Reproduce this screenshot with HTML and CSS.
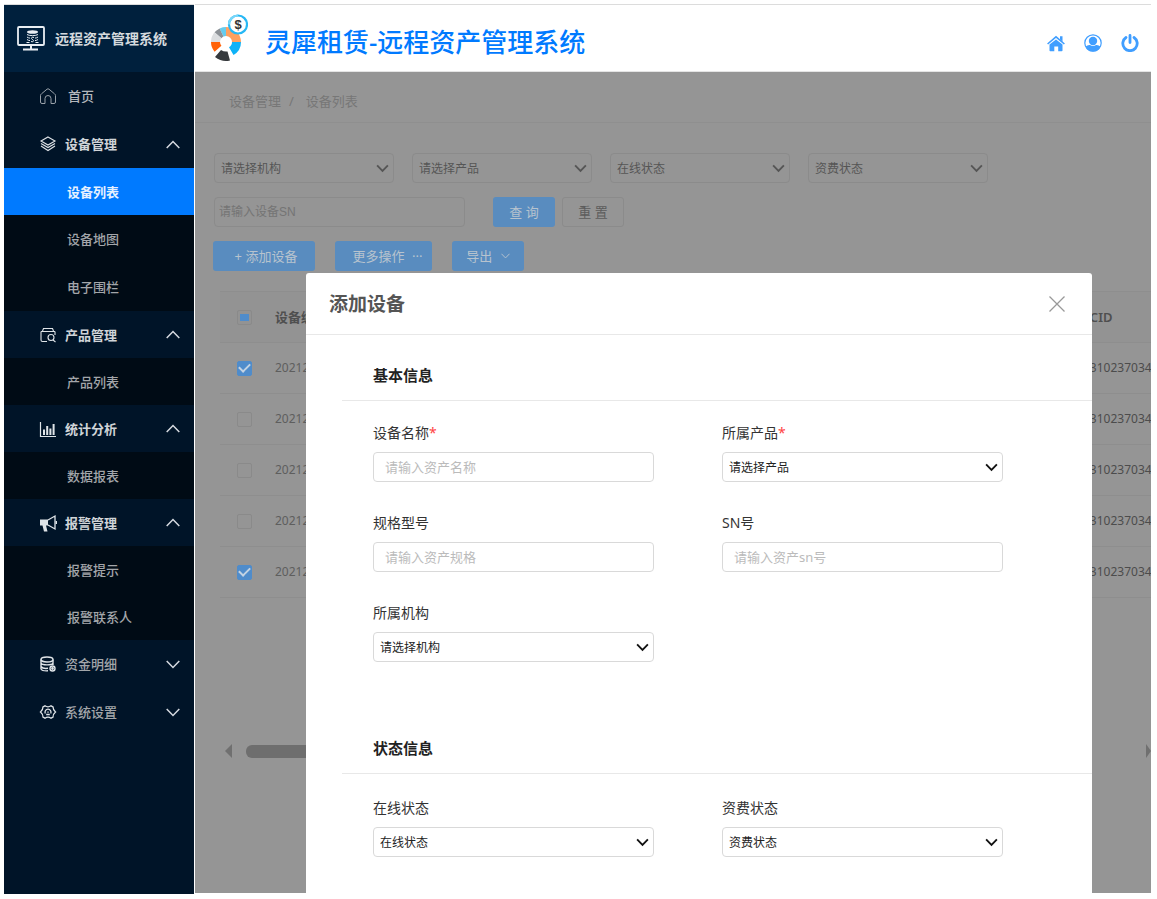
FILE: index.html
```html
<!DOCTYPE html>
<html lang="zh-CN">
<head>
<meta charset="utf-8">
<title>灵犀租赁-远程资产管理系统</title>
<link rel="stylesheet" href="styles.css">
</head>
<body>
<svg class="sprite" aria-hidden="true">
  <symbol id="down" viewBox="0 0 14 9"><path d="M1.2 1.2 7 7l5.800-5.800" fill="none" stroke="currentColor" stroke-width="2"/></symbol>
  <symbol id="thin" viewBox="0 0 14 9"><path d="M.7 1 7 7.500 13.300 1" fill="none" stroke="currentColor" stroke-width="1.500"/></symbol>
</svg>
<div class="app">
  <aside class="sidebar">
    <div class="brand">
      <svg class="brand-icon" viewBox="0 0 28 26" fill="none" stroke="#e9eef3">
        <rect x="1" y="1" width="26" height="18" rx="1" stroke-width="1.800"/>
        <path d="M14 19v4M6 23.500h15" stroke-width="2"/>
        <ellipse cx="15.500" cy="6" rx="5.500" ry="1.800" fill="#e9eef3" stroke="none"/>
        <path d="M10 8.500c2 1.500 9 1.500 11 0M10 11c1 .8 2 1 3 1.100M18 12.100c1-.1 2-.3 3-1.100M10 13.500c1 .8 2 1 3 1.100M18 14.600c1-.1 2-.3 3-1.100M9.500 16.500h3M18.500 16.500h3M17 11.500c-3-1-3 1.500-1.500 2s1.500 3-1.500 2" stroke-width="1"/>
      </svg>
      <span>远程资产管理系统</span>
    </div>
    <nav class="menu">
      <a class="item home" href="#"><svg class="ico" viewBox="0 0 18 18" fill="none" stroke="currentColor"><path d="M1.500 8.500Q1.500 7.500 2.500 6.800L8 2.200q1-.8 2 0l5.500 4.600q1 .7 1 1.700V15q0 1.500-1.500 1.500h-3v-5a3 3 0 0 0-6 0v5H3q-1.500 0-1.500-1.500z"/></svg>首页</a>
      <a class="item open" href="#"><svg class="ico" viewBox="0 0 18 18" fill="none" stroke="currentColor" stroke-width="1.100"><path d="M9 2l7 4-7 4-7-4zM2 8.500l7 4 7-4M2 11l7 4.500 7-4.500"/></svg>设备管理<svg class="arrow up"><use href="#thin"/></svg></a>
      <div class="sub">
        <a class="item active" href="#">设备列表</a>
        <a class="item" href="#">设备地图</a>
        <a class="item" href="#">电子围栏</a>
      </div>
      <a class="item open short" href="#"><svg class="ico" viewBox="0 0 18 18" fill="none" stroke="currentColor" stroke-width="1.100"><path d="M2 5.500h14M3.500 5l1-2.500h9l1 2.500M8 15.500H3.500Q2 15.500 2 14V5.500M16 5.500V9"/><circle cx="12" cy="11.500" r="3"/><path d="M14 14l2.500 2"/></svg>产品管理<svg class="arrow up"><use href="#thin"/></svg></a>
      <div class="sub"><a class="item short" href="#">产品列表</a></div>
      <a class="item open short" href="#"><svg class="ico" viewBox="0 0 18 18" fill="none" stroke="currentColor"><path d="M1.500 2v14.500H17" stroke-width="1.200"/><path d="M5 15V9.500M8.200 15V6M11.400 15V8.500M14.600 15V4" stroke-width="2"/></svg>统计分析<svg class="arrow up"><use href="#thin"/></svg></a>
      <div class="sub"><a class="item short" href="#">数据报表</a></div>
      <a class="item open short" href="#"><svg class="ico" viewBox="0 0 18 18"><path d="M1 5.500h8v6H7l1.500 6H5l-1.500-6H1z" fill="currentColor"/><path d="M9 6l7-4v13l-7-4M17.500 7v3" fill="none" stroke="currentColor" stroke-width="1.300"/></svg>报警管理<svg class="arrow up"><use href="#thin"/></svg></a>
      <div class="sub">
        <a class="item short" href="#">报警提示</a>
        <a class="item short" href="#">报警联系人</a>
      </div>
      <a class="item" href="#"><svg class="ico" viewBox="0 0 18 18" fill="none" stroke="currentColor" stroke-width="1.400"><ellipse cx="8" cy="4.500" rx="6" ry="2.500"/><path d="M2 4.500v3.500c1 2.500 11 2.500 12 0V4.500M2 8v3.500c1 1.500 4 2.200 7 1.800M14 8v2M2 11.500V14c1 1.800 4 2 7 1.800"/><circle cx="13.500" cy="13.500" r="2.500"/><circle cx="13.500" cy="13.500" r=".7"/></svg>资金明细<svg class="arrow"><use href="#thin"/></svg></a>
      <a class="item" href="#"><svg class="ico" viewBox="0 0 18 18" fill="none" stroke="currentColor" stroke-width="1.300"><path d="M6 2.800q3 2 6 0l2 1q0 3.200 2.500 5.200-2.500 2-2.500 5.200l-2 1q-3-2-6 0l-2-1q0-3.200-2.500-5.200Q4 7 4 3.800z"/><path d="M6.300 10.500a3 3 0 1 1 5.400 0M9 8.500v1.200M7.200 11.500h3.600"/></svg>系统设置<svg class="arrow"><use href="#thin"/></svg></a>
    </nav>
  </aside>

  <div class="content">
    <header class="topbar">
      <svg class="logo" viewBox="0 0 38 48" fill="none">
        <g stroke-width="9">
          <path d="M16 17.500A10.500 10.500 0 0 1 26.500 28" stroke="#ffa05f"/>
          <path d="M26.500 28A10.500 10.500 0 0 1 21.250 37.100" stroke="#0db2f7"/>
          <path d="M11.560 18.480A10.500 10.500 0 0 1 16 17.500" stroke="#66ccee"/>
          <path d="M7.960 21.250A10.500 10.500 0 0 1 11.560 18.480" stroke="#8d9297"/>
          <path d="M5.500 28A10.500 10.500 0 0 1 7.960 21.250" stroke="#dcdee0"/>
          <path d="M8 34.750A10.500 10.500 0 0 1 5.500 28" stroke="#ff6208"/>
        </g>
        <path d="M11 36q3 2 6.500 1.500l2.500 9q-8 2-15-3.500z" fill="#36393d"/>
        <circle cx="28" cy="10.500" r="9" fill="#fff" stroke="#27b8f5" stroke-width="2.200"/>
        <path d="M19 10.500a9 9 0 0 1 9-9" stroke="#77d6f9" stroke-width="2.200"/>
        <text class="dollar" x="28" y="15" text-anchor="middle">$</text>
      </svg>
      <h1>灵犀租赁-远程资产管理系统</h1>
      <nav class="tools">
        <a href="#" aria-label="首页"><svg viewBox="0 0 18 18" fill="#409eff"><path d="M9 5.500l6.500 5v6q0 .8-.8.800h-3.500v-4.800H7.300v4.800H3.300q-.8 0-.8-.8v-6z"/><path d="M.6 10 9 2.800l8.400 7.200" fill="none" stroke="#409eff" stroke-width="1.600"/><path d="M13 2.300h2.500v5.500L13 5.500z"/></svg></a>
        <a href="#" aria-label="用户"><svg viewBox="0 0 18 18"><circle cx="9" cy="9" r="8.200" fill="none" stroke="#409eff" stroke-width="1.200"/><circle cx="9" cy="7" r="4.200" fill="#409eff"/><path d="M1.500 12.500q2.500-2 4.500-1.500 3 2 6 0 2-.5 4.500 1.500-2 5-7.500 5t-7.500-5z" fill="#409eff"/></svg></a>
        <a href="#" aria-label="退出"><svg viewBox="0 0 18 18" fill="none" stroke="#409eff" stroke-width="2.800" stroke-linecap="round"><path d="M5 3.500a7.200 7.200 0 1 0 8 0M9 1.500v7"/></svg></a>
      </nav>
    </header>

    <main class="page">
      <div class="crumbs"><a href="#">设备管理</a><span>/</span><a href="#">设备列表</a></div>
      <div class="filters">
        <div class="picks">
          <div class="select"><select aria-label="机构"><option>请选择机构</option></select><svg><use href="#down"/></svg></div>
          <div class="select"><select aria-label="产品"><option>请选择产品</option></select><svg><use href="#down"/></svg></div>
          <div class="select"><select aria-label="在线状态"><option>在线状态</option></select><svg><use href="#down"/></svg></div>
          <div class="select"><select aria-label="资费状态"><option>资费状态</option></select><svg><use href="#down"/></svg></div>
        </div>
        <div class="search">
          <input class="sn" type="text" placeholder="请输入设备SN" aria-label="设备SN">
          <button class="btn query" type="button">查 询</button>
          <button class="btn plain" type="button">重 置</button>
        </div>
        <div class="actions">
          <button class="btn add" type="button">+ 添加设备</button>
          <button class="btn more" type="button">更多操作 <span>···</span></button>
          <button class="btn export" type="button">导出 <svg><use href="#thin"/></svg></button>
        </div>
      </div>
      <div class="table-wrap">
        <table>
          <thead><tr><th class="check"><input type="checkbox" class="partial" aria-label="全选"></th><th>设备编号</th><th class="iccid">ICCID</th></tr></thead>
          <tbody>
            <tr><td class="check"><input type="checkbox" checked aria-label="选择第1行"></td><td>20212</td><td class="iccid">0310237034</td></tr>
            <tr><td class="check"><input type="checkbox" aria-label="选择第2行"></td><td>20212</td><td class="iccid">0310237034</td></tr>
            <tr><td class="check"><input type="checkbox" aria-label="选择第3行"></td><td>20212</td><td class="iccid">0310237034</td></tr>
            <tr><td class="check"><input type="checkbox" aria-label="选择第4行"></td><td>20212</td><td class="iccid">0310237034</td></tr>
            <tr><td class="check"><input type="checkbox" checked aria-label="选择第5行"></td><td>20212</td><td class="iccid">0310237034</td></tr>
          </tbody>
        </table>
      </div>
      <div class="scroller"><i class="tri left"></i><i class="thumb"></i><i class="tri right"></i></div>

      <section class="modal" role="dialog" aria-labelledby="dlg">
        <header class="modal-head"><h2 id="dlg">添加设备</h2><button class="close" type="button" aria-label="关闭"><svg viewBox="0 0 16 16" stroke="#999" stroke-width="1.300"><path d="M.5.5l15 15M15.500.5l-15 15"/></svg></button></header>
        <form>
          <h3>基本信息</h3>
          <div class="fields basic">
            <div class="field"><label for="name">设备名称<b>*</b></label><input id="name" type="text" placeholder="请输入资产名称"></div>
            <div class="field"><label for="product">所属产品<b>*</b></label><div class="select"><select id="product"><option>请选择产品</option></select><svg><use href="#down"/></svg></div></div>
            <div class="field"><label for="spec">规格型号</label><input id="spec" type="text" placeholder="请输入资产规格"></div>
            <div class="field"><label for="snno">SN号</label><input id="snno" type="text" placeholder="请输入资产sn号"></div>
            <div class="field"><label for="org">所属机构</label><div class="select"><select id="org"><option>请选择机构</option></select><svg><use href="#down"/></svg></div></div>
          </div>
          <h3>状态信息</h3>
          <div class="fields state">
            <div class="field"><label for="online">在线状态</label><div class="select"><select id="online"><option>在线状态</option></select><svg><use href="#down"/></svg></div></div>
            <div class="field"><label for="fee">资费状态</label><div class="select"><select id="fee"><option>资费状态</option></select><svg><use href="#down"/></svg></div></div>
          </div>
        </form>
      </section>
    </main>
  </div>
</div>
</body>
</html>
```

FILE: styles.css
```css
* { box-sizing: border-box; }
body {
  margin: 0;
  padding: 4px 6px 5px 4px;
  height: 100vh;
  background: #fff;
  font: 13px/20px "Noto Sans", "Noto Sans CJK SC", sans-serif;
  color: #333;
}
a { color: inherit; text-decoration: none; }
h1, h2, h3 { margin: 0; }
input, select, button { font: inherit; color: inherit; margin: 0; }
.sprite { position: absolute; width: 0; height: 0; }

.app { display: flex; height: 100%; }

/* sidebar */
.sidebar { width: 190px; flex: none; background: #001428; overflow: hidden; }
.brand {
  height: 68px;
  padding: 0 12px 0 13px;
  display: flex;
  align-items: center;
  gap: 10px;
  background: #00203d;
  border-top: 1px solid #dcdcdc;
  color: #d5dade;
  font-size: 14px;
  font-weight: 600;
  white-space: nowrap;
}
.brand-icon { width: 28px; height: 26px; }
.item {
  display: flex;
  align-items: center;
  height: 48px;
  padding: 0 14px 0 35px;
  color: #a3a6aa;
  font-weight: 500;
}
.item.short, .item.active { height: 47px; }
.item.open { color: #d0d4d8; font-weight: 600; }
.item.home { color: #b4b8bc; }
.ico { width: 18px; height: 18px; margin-right: 8px; color: #dfe4e8; }
.home .ico { margin-right: 11px; color: #98a0a8; }
.arrow { width: 14px; height: 9px; margin-left: auto; color: #d5dae0; }
.arrow.up { transform: rotate(180deg); }
.sub { background: #000b15; }
.sub .item { padding-left: 63px; }
.sub .active { background: #007aff; color: #e6f1ff; font-weight: 600; }

/* top bar */
.content { flex: 1; min-width: 0; display: flex; flex-direction: column; margin: 0 0 1px 1px; }
.topbar {
  height: 68px;
  flex: none;
  display: flex;
  align-items: center;
  padding: 0 12px 0 15px;
  border-top: 1px solid #dcdcdc;
  border-bottom: 1px solid #e4e4e4;
}
.logo { width: 38px; height: 48px; margin-right: 17px; }
.dollar { font: bold 13px "Liberation Sans", sans-serif; fill: #333; }
.topbar h1 { font-size: 26px; line-height: 36px; font-weight: 500; color: #007aff; white-space: nowrap; padding-top: 8px; }
.tools { margin-left: auto; display: flex; gap: 19px; padding-top: 9px; }
.tools svg { display: block; width: 18px; height: 18px; }

/* list page behind the dialog */
.page { position: relative; flex: 1; min-height: 0; overflow: hidden; background: #959595; color: #555; }
.crumbs {
  height: 51px;
  padding: 7px 34px 0;
  display: flex;
  align-items: center;
  gap: 8px;
  color: #777;
  border-bottom: 1px solid #8f8f8f;
}
.crumbs span { margin-right: 4px; }
.filters { padding: 30px 18px 20px; display: flex; flex-direction: column; gap: 14px; }
.picks { display: flex; gap: 18px; padding-left: 1px; }
.picks .select { width: 180px; }
.search { display: flex; padding-left: 1px; }
.actions { display: flex; gap: 20px; }

.select { position: relative; }
.select svg { position: absolute; right: 5px; top: 11px; width: 13px; height: 9px; pointer-events: none; }
select, input[type="text"] {
  appearance: none;
  width: 100%;
  height: 30px;
  border: 1px solid #d9d9d9;
  border-radius: 4px;
  background: transparent;
  padding: 0 6px;
}
select { font-size: 12px; padding-top: 1px; }
.filters select, .filters input { border-color: #8b8b8b; }
.filters input.sn { width: 251px; padding: 0 4px; margin-right: 28px; font-size: 12px; font-family: "Liberation Sans", "Noto Sans CJK SC", sans-serif; }
.sn::placeholder { color: #747474; }

.btn {
  height: 30px;
  border: 0;
  border-radius: 3px;
  padding: 0;
  background: #598cbf;
  color: #b7c3ce;
  white-space: nowrap;
}
.btn.query { width: 62px; margin-right: 7px; }
.btn.plain { width: 62px; background: transparent; border: 1px solid #8b8b8b; color: #5c5c5c; }
.btn.add { width: 102px; padding-left: 4px; }
.btn.more { width: 97px; padding-left: 8px; }
.btn.more span { margin-left: 4px; }
.btn.export { width: 72px; }
.btn.export svg { width: 9px; height: 6px; margin: 0 0 2px 5px; }

/* table */
.table-wrap { padding-left: 25px; }
table { width: 100%; table-layout: fixed; border-collapse: collapse; font-size: 12px; border-top: 1px solid #8e8e8e; }
th, td { height: 51px; padding: 0; text-align: left; white-space: nowrap; border-bottom: 1px solid #8e8e8e; }
th { font-size: 13px; font-weight: 600; color: #4f4f4f; background: #939393; }
td { color: #5e5e5e; }
.check { width: 55px; padding-left: 17px; }
.iccid { width: 74px; }
td.iccid { padding-left: 6px; color: #4c4c4c; }
.check input {
  appearance: none;
  display: grid;
  place-items: center;
  width: 15px;
  height: 15px;
  border: 1px solid #8a8a8a;
  border-radius: 2px;
}
.check input:checked { background: #4f8ccb; border-color: #4f8ccb; }
.check input:checked::after { content: ""; width: 9px; height: 5px; border: solid #c3d3e3; border-width: 0 0 2px 2px; transform: rotate(-45deg); margin-bottom: 3px; }
.check .partial::after { content: ""; width: 9px; height: 7px; background: #4f8ccb; }

.scroller { display: flex; align-items: center; height: 24px; margin: 141px 0 0 30px; }
.tri { border: 7px solid transparent; border-left-width: 0; border-right: 7px solid #707070; }
.tri.right { border-right-width: 0; border-left: 5px solid #707070; margin-left: auto; }
.thumb { width: 560px; height: 13px; margin-left: 14px; border-radius: 6px; background: #6e6e6e; }

/* dialog */
.modal {
  position: absolute;
  inset: 201px 59px 0 111px;
  background: #fff;
  border-radius: 3px 3px 0 0;
  color: #333;
  overflow: hidden;
}
.modal-head {
  height: 62px;
  display: flex;
  align-items: center;
  justify-content: space-between;
  padding: 0 27px 0 23px;
  border-bottom: 1px solid #e8e8e8;
}
.modal h2 { font-size: 19px; line-height: 28px; font-weight: 600; color: #555; }
.close { width: 16px; height: 16px; padding: 0; border: 0; background: none; display: flex; }
.close svg { width: 16px; height: 16px; }
.modal h3 {
  margin-left: 36px;
  padding: 28px 31px 13px;
  font-size: 15px;
  line-height: 24px;
  font-weight: 600;
  color: #222;
  border-bottom: 1px solid #e8e8e8;
}
.fields { display: grid; grid-template-columns: 1fr 1fr; gap: 31px 68px; padding: 22px 89px 0 67px; }
.fields.basic { padding-bottom: 46px; }
.fields.state { padding-top: 24px; }
.field { display: flex; flex-direction: column; gap: 9px; }
.field label { font-size: 14px; }
.field label b { color: #f44; font-weight: 400; }
.field input { padding: 0 11px; }
.field input::placeholder { color: #bbb; }
.field select { color: #222; }
.field .select svg { color: #111; }
```
